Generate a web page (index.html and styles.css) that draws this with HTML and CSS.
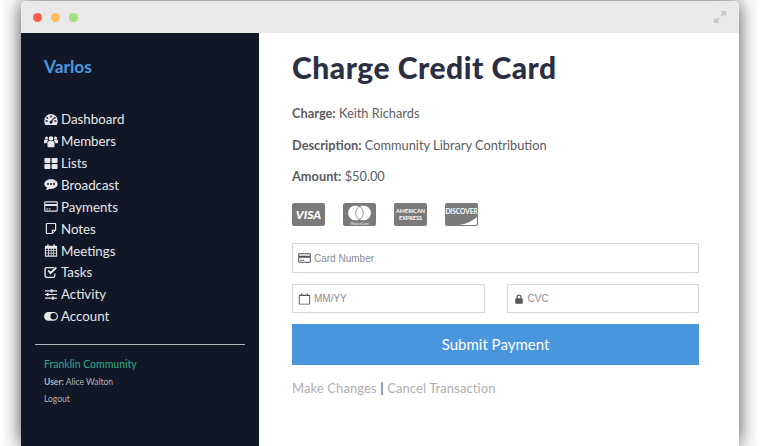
FILE: index.html
```html
<!DOCTYPE html>
<html lang="en">
<head>
    <meta charset="UTF-8">
    <title>Varlos - Charge Credit Card</title>
    <link rel="stylesheet" href="styles.css">
</head>
<body>
    <svg class="icon-defs" width="0" height="0">
        <symbol id="i-card" viewBox="0 0 14 12">
            <path fill-rule="evenodd" d="M1.4 0.8h11.2a1.2 1.2 0 0 1 1.2 1.2v8a1.2 1.2 0 0 1-1.2 1.2H1.4A1.2 1.2 0 0 1 .2 10V2A1.2 1.2 0 0 1 1.4.8zM1.3 2v1.6h11.4V2zM1.3 5.6V10h11.4V5.6zM2.2 8h2.2v1H2.2zM5 8h1.6v1H5z"/>
        </symbol>
        <symbol id="i-cal" viewBox="0 0 14 14">
            <path fill-rule="evenodd" d="M3 .6h1.4v1.4h5.2V.6H11v1.4h1.600a1 1 0 0 1 1 1v9.400a1 1 0 0 1-1 1H1.400a1 1 0 0 1-1-1V3a1 1 0 0 1 1-1H3zM1.500 3.400v9h11v-9z"/>
        </symbol>
    </svg>

    <div class="window">
        <div class="titlebar">
            <span class="dot dot-red"></span>
            <span class="dot dot-yellow"></span>
            <span class="dot dot-green"></span>
            <svg class="expand" viewBox="0 0 12 12"><path d="M6.600 0H12v5.400L10 3.400 7.800 5.600 6.400 4.200 8.600 2zM0 6.600l2 2L4.200 6.400 5.600 7.800 3.400 10l2 2H0z"/></svg>
        </div>
        <div class="app">
            <aside class="sidebar">
                <div class="brand">Varlos</div>
                <ul class="nav">
                    <li><svg class="nav-icon" viewBox="0 0 14 12"><path fill-rule="evenodd" d="M7 .6a6.800 6.800 0 0 1 6.800 6.800c0 1.500-.4 2.800-1.200 4H1.400C.6 10.200.2 8.900.2 7.400A6.800 6.800 0 0 1 7 .6zM6.300 2v2h1.400V2zM3 3.200l-1 1 1.400 1.400 1-1zM11 3.200L9.600 4.600l1 1L12 4.200zM1.600 6.800v1.400h2V6.800zM10.400 6.800v1.400h2V6.800zM9.200 4.400L7.300 7.200a1.500 1.500 0 1 0 1 .6L10 5z"/></svg>Dashboard</li>
                    <li><svg class="nav-icon" viewBox="0 0 14 12"><circle cx="7" cy="3" r="2.300"/><circle cx="2.500" cy="2.600" r="1.500"/><circle cx="11.500" cy="2.600" r="1.500"/><path d="M3.500 7.400c0-1 .8-1.800 1.800-1.800h3.400c1 0 1.800.8 1.800 1.800v3.400c0 .6-.5 1-1 1H4.500c-.5 0-1-.4-1-1zM0 5.400c0-.8.600-1.300 1.300-1.300h2c.2.500.5.900 1 1.200-.9.400-1.500 1.200-1.600 2.400H1c-.6 0-1-.4-1-1zM14 5.400c0-.8-.6-1.300-1.300-1.300h-2c-.2.500-.5.900-1 1.200.9.400 1.500 1.200 1.600 2.400H13c.6 0 1-.4 1-1z"/></svg>Members</li>
                    <li><svg class="nav-icon" viewBox="0 0 14 12"><rect x=".4" y=".4" width="6" height="5" rx=".8"/><rect x="7.600" y=".4" width="6" height="5" rx=".8"/><rect x=".4" y="6.600" width="6" height="5" rx=".8"/><rect x="7.600" y="6.600" width="6" height="5" rx=".8"/></svg>Lists</li>
                    <li><svg class="nav-icon" viewBox="0 0 14 12"><path fill-rule="evenodd" d="M7 .8c3.700 0 6.700 2.100 6.700 4.800S10.700 10.400 7 10.400c-.6 0-1.200 0-1.700-.2-.9.800-2.200 1.300-3.500 1.300.7-.7 1.100-1.500 1.200-2.300C1.300 8.300.3 7 .3 5.600.3 2.900 3.300.8 7 .8zM4 4.600a1 1 0 1 0 0 2 1 1 0 0 0 0-2zM7 4.600a1 1 0 1 0 0 2 1 1 0 0 0 0-2zM10 4.600a1 1 0 1 0 0 2 1 1 0 0 0 0-2z"/></svg>Broadcast</li>
                    <li><svg class="nav-icon"><use href="#i-card"/></svg>Payments</li>
                    <li><svg class="nav-icon" viewBox="0 0 14 12"><path fill-rule="evenodd" d="M2.800.4h8.400a1 1 0 0 1 1 1v6.400l-3.800 3.800H2.800a1 1 0 0 1-1-1V1.400a1 1 0 0 1 1-1zM3 1.600v8.800h4.800V7.200h3.200V1.600zM9 8.400v1.400l1.400-1.400z"/></svg>Notes</li>
                    <li><svg class="nav-icon" viewBox="0 0 14 14"><path fill-rule="evenodd" d="M3 .4h1.400V2h5.200V.4H11V2h1.600a1 1 0 0 1 1 1v9.800a1 1 0 0 1-1 1H1.400a1 1 0 0 1-1-1V3a1 1 0 0 1 1-1H3zM1.500 5v1.800h2.300V5zM4.700 5v1.800h2V5zM7.500 5v1.800h2V5zM10.300 5v1.800h2.200V5zM1.500 7.600v1.900h2.300V7.600zM4.700 7.600v1.900h2V7.600zM7.500 7.600v1.900h2V7.600zM10.300 7.600v1.900h2.200V7.600zM1.500 10.300v2.200h2.300v-2.200zM4.700 10.300v2.200h2v-2.200zM7.500 10.300v2.200h2v-2.200zM10.300 10.300v2.200h2.200v-2.200z"/></svg>Meetings</li>
                    <li><svg class="nav-icon" viewBox="0 0 14 12"><path fill-rule="evenodd" d="M2.600.6h7.600v1.200H2.800a1 1 0 0 0-1 1v6.400a1 1 0 0 0 1 1h6.400a1 1 0 0 0 1-1V7.400l1.200-1.200v3a2.200 2.200 0 0 1-2.200 2.200H2.600A2.200 2.200 0 0 1 .4 9.200V2.800A2.200 2.200 0 0 1 2.600.6z"/><path d="M3.600 4.600l1.200-1.200 1.700 1.700L11.600.4l1.400 1.300-6.500 6.400z"/></svg>Tasks</li>
                    <li><svg class="nav-icon" viewBox="0 0 14 12"><path d="M1 1.700h5.800v-1h1.800v1H13v1.200H8.600v1H6.800v-1H1zM1 5.400h1.700v-1h1.800v1H13v1.200H4.500v1H2.700v-1H1zM1 9.100h7v-1h1.800v1H13v1.200H9.800v1H8v-1H1z"/></svg>Activity</li>
                    <li><svg class="nav-icon" viewBox="0 0 14 12"><path fill-rule="evenodd" d="M4.400 1.400h5.200a4.400 4.400 0 0 1 0 8.800H4.400a4.400 4.400 0 0 1 0-8.800zM9.600 2.600a3.200 3.200 0 1 0 0 6.400 3.200 3.200 0 0 0 0-6.400z"/></svg>Account</li>
                </ul>
                <hr class="divider">
                <div class="community">Franklin Community</div>
                <div class="side-small"><b>User:</b> Alice Walton</div>
                <div class="side-small">Logout</div>
            </aside>

            <main class="content">
                <h1>Charge Credit Card</h1>
                <p class="line"><b>Charge:</b> Keith Richards</p>
                <p class="line"><b>Description:</b> Community Library Contribution</p>
                <p class="line"><b>Amount:</b> $50.00</p>

                <div class="cards">
                    <div class="pay-card"><span class="visa">VISA</span></div>
                    <div class="pay-card mc">
                        <svg viewBox="0 0 33 23"><circle cx="12.500" cy="10" r="7.800" fill="#fff"/><circle cx="20.500" cy="10" r="7.800" fill="#fff"/><circle cx="12.500" cy="10" r="7.800" fill="none" stroke="#7a7a7a" stroke-width=".8"/><circle cx="20.500" cy="10" r="7.800" fill="none" stroke="#7a7a7a" stroke-width=".8"/></svg>
                        <span class="mc-text">MasterCard</span>
                    </div>
                    <div class="pay-card amex"><span>AMERICAN</span><span>EXPRESS</span></div>
                    <div class="pay-card disc">
                        <span>DISCOVER</span>
                        <svg viewBox="0 0 33 23"><path d="M32 14v6.500a1.500 1.500 0 0 1-1.500 1.500H14c8-1 13-4 18-8z" fill="#fff"/></svg>
                    </div>
                </div>

                <form class="pay-form">
                    <div class="field">
                        <svg class="field-icon"><use href="#i-card"/></svg>
                        <span>Card Number</span>
                    </div>
                    <div class="field-row">
                        <div class="field">
                            <svg class="field-icon"><use href="#i-cal"/></svg>
                            <span>MM/YY</span>
                        </div>
                        <div class="field">
                            <svg class="field-icon lock" viewBox="2 0 10 12"><path fill-rule="evenodd" d="M7 .4a3.200 3.200 0 0 1 3.200 3.200V5h.6c.5 0 .9.400.9.900v5.200c0 .5-.4.900-.9.900H3.200c-.5 0-.9-.4-.9-.9V5.900c0-.5.400-.9.900-.9h.6V3.600A3.200 3.200 0 0 1 7 .4zM7 1.800c-1 0-1.800.8-1.800 1.800V5h3.600V3.600c0-1-.8-1.800-1.800-1.800z"/></svg>
                            <span>CVC</span>
                        </div>
                    </div>
                    <button class="submit" type="button">Submit Payment</button>
                </form>
                <p class="after-links">Make Changes <b>|</b> Cancel Transaction</p>
            </main>
        </div>
    </div>
</body>
</html>
```

FILE: styles.css
```css
* {
    margin: 0;
    padding: 0;
    box-sizing: border-box;
    font-family: "Lato", "Open Sans", sans-serif;
}

html, body {
    height: 446px;
    overflow: hidden;
    background-color: #fff;
}

.icon-defs {
    position: absolute;
}

/* Ventana */
.window {
    width: 718px;
    height: 445px;
    margin: 1px auto 0;
    border-radius: 5px 5px 0 0;
    box-shadow: 0 0 20px rgba(0,0,0,0.7);
    background-color: #fff;
    overflow: hidden;
}

.titlebar {
    height: 32px;
    background-color: #e9e9e9;
    display: flex;
    align-items: center;
    padding: 0 13px 0 12px;
    gap: 9px;
}

.dot {
    width: 9px;
    height: 9px;
    border-radius: 50%;
}

.dot-red { background-color: #fb5d4b; }
.dot-yellow { background-color: #fdbd5f; }
.dot-green { background-color: #a5e07a; }

.expand {
    width: 12px;
    height: 12px;
    margin-left: auto;
    fill: #c4c4c4;
}

.app {
    display: flex;
    height: 413px;
}

/* Sidebar */
.sidebar {
    width: 238px;
    background-color: #111726;
    padding: 24px 14px 0 14px;
    color: #e6e6e8;
}

.brand {
    color: #4a9ae0;
    font-size: 17.300px;
    font-weight: 700;
    line-height: 20px;
    padding-left: 9px;
    margin-bottom: 31.300px;
}

.nav {
    list-style: none;
    padding-left: 9px;
}

.nav li {
    display: flex;
    align-items: center;
    height: 21.900px;
    font-size: 13.300px;
}

.nav-icon {
    width: 14px;
    height: 13px;
    margin-right: 3px;
    fill: #e6e6e8;
}

.divider {
    border: none;
    height: 1px;
    background-color: #b5b5ba;
    margin-top: 16.700px;
    margin-bottom: 12px;
}

.community {
    color: #2fa98b;
    font-size: 10.500px;
    line-height: 15px;
    padding-left: 9px;
    margin-bottom: 2px;
}

.side-small {
    color: #b4b4b8;
    font-size: 8.500px;
    line-height: 17px;
    padding-left: 9px;
}

/* Contenido */
.content {
    width: 480px;
    padding: 15px 40px 0 33px;
}

h1 {
    color: #2a2f45;
    font-size: 30px;
    font-weight: 900;
    line-height: 38px;
    letter-spacing: .5px;
    margin-bottom: 18px;
}

.line {
    color: #5b5b60;
    font-size: 12.800px;
    line-height: 18px;
    margin-bottom: 13.500px;
}

.cards {
    display: flex;
    gap: 18px;
    margin-top: 18px;
    margin-bottom: 17px;
}

.pay-card {
    position: relative;
    width: 33px;
    height: 23px;
    background-color: #7a7a7a;
    border-radius: 2px;
    color: #fff;
    display: flex;
    flex-direction: column;
    align-items: center;
    justify-content: center;
    overflow: hidden;
}

.pay-card svg {
    position: absolute;
    top: 0;
    left: 0;
    width: 33px;
    height: 23px;
}

.visa {
    font-size: 12px;
    font-weight: 900;
    font-style: italic;
}

.mc-text {
    position: absolute;
    bottom: 0;
    font-size: 3.500px;
}

.amex span {
    font-size: 5.500px;
    line-height: 7px;
    font-weight: 700;
    white-space: nowrap;
}

.disc {
    justify-content: flex-start;
}

.disc span {
    font-size: 6.500px;
    font-weight: 700;
    line-height: 8px;
    margin-top: 5px;
}

.field {
    flex: 1;
    display: flex;
    align-items: center;
    height: 30px;
    background-color: #fff;
    border: 1.500px solid #d5d6dd;
    padding-left: 5px;
    font-size: 10px;
    color: #8a8a8f;
}

.field span {
    font-family: "Liberation Sans", sans-serif;
}

.field-icon {
    width: 13px;
    height: 12px;
    margin-right: 3px;
    fill: #55555a;
}

.lock {
    width: 8px;
    height: 10px;
    margin-left: 2px;
    margin-right: 5px;
}

.field-row {
    display: flex;
    gap: 22px;
    margin-top: 11px;
}

.field-row .field {
    height: 29px;
}

.submit {
    display: block;
    width: 100%;
    height: 41px;
    margin-top: 11px;
    padding-bottom: 2px;
    background-color: #4a96dc;
    border: none;
    color: #fff;
    font-size: 15px;
}

.after-links {
    color: #aeaeb0;
    font-size: 13px;
    letter-spacing: .1px;
    line-height: 18px;
    margin-top: 14px;
}

.after-links b {
    color: #6f6f73;
    font-weight: 700;
}
```
